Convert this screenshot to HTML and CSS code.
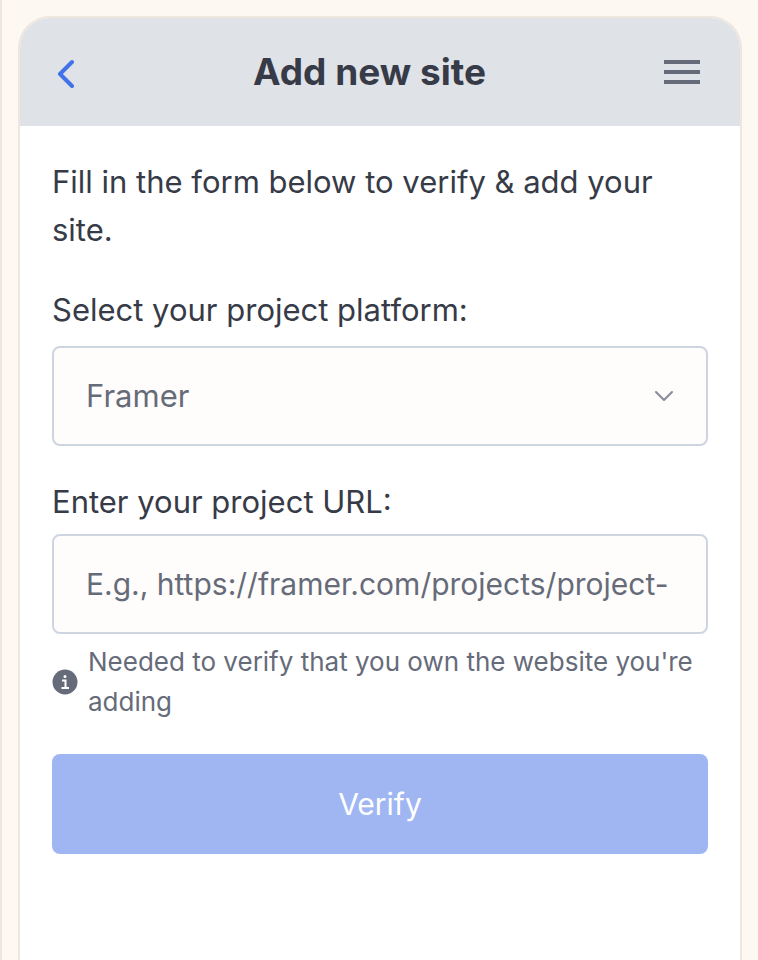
FILE: index.html
```html
<!DOCTYPE html>
<html lang="en">
<head>
  <meta charset="UTF-8" />
  <meta name="viewport" content="width=device-width, initial-scale=1.0"/>
  <title>Add new site</title>
  <link rel="stylesheet" href="styles.css">
</head>
<body>
  <div class="panel">
    <header class="panel-header">
      <button type="button" class="icon-button back-button" aria-label="Back">
        <svg width="20" height="32" viewBox="0 0 20 32" fill="none" stroke="#4272ea" stroke-width="4" stroke-linecap="round" stroke-linejoin="round"><path d="M17 6L5 18l12 12"/></svg>
      </button>
      <h1>Add new site</h1>
      <button type="button" class="icon-button menu-button" aria-label="Menu">
        <svg width="36" height="24" viewBox="0 0 36 24" fill="#666b7a"><path d="M0 0h36v4H0zM0 10h36v4H0zM0 20h36v4H0z"/></svg>
      </button>
    </header>

    <main>
      <form class="site-form">
        <p class="intro">Fill in the form below to verify &amp; add your site.</p>

        <div class="field platform-field">
          <label for="platform">Select your project platform:</label>
          <div class="select-wrap">
            <select id="platform" class="control">
              <option>Framer</option>
            </select>
            <svg class="chevron" width="20" height="12" viewBox="0 0 20 12" fill="none" stroke="#888c99" stroke-width="2" stroke-linecap="round" stroke-linejoin="round"><path d="M2 2l8 8 8-8"/></svg>
          </div>
        </div>

        <div class="field url-field">
          <label for="url">Enter your project URL:</label>
          <input type="text" id="url" class="control" placeholder="E.g., https://framer.com/projects/project-" aria-describedby="url-hint">
          <div class="hint">
            <svg width="26" height="26" viewBox="0 0 26 26"><circle cx="13" cy="13" r="12.5" fill="#666b7a"/><circle cx="13" cy="7.5" r="1.5" fill="#fff"/><path d="M10 11.5h3.5V19M9.5 19h7.5" fill="none" stroke="#fff" stroke-width="2"/></svg>
            <p id="url-hint">Needed to verify that you own the website you're adding</p>
          </div>
        </div>

        <button type="submit" class="verify-button" disabled>Verify</button>
      </form>
    </main>
  </div>
</body>
</html>
```
FILE: styles.css
```css
/* General Styles */
* {
  box-sizing: border-box;
}

body {
  margin: 0;
  padding: 16px 16px 0 16px;
  min-height: 100vh;
  display: flex;
  background-color: #fdf8f1;
  border-left: 2px solid #efe6de;
  font-family: Inter, sans-serif;
  font-size: 31px;
  line-height: 48px;
  color: #373b47;
}

h1,
p {
  margin: 0;
}

button,
input,
select {
  font: inherit;
}

/* Panel */
.panel {
  flex: 1;
  min-width: 0;
  background-color: #fff;
  border: 2px solid #efe6de;
  border-bottom: none;
  border-radius: 32px 32px 0 0;
  overflow: hidden;
}

.panel-header {
  display: flex;
  align-items: center;
  justify-content: space-between;
  height: 108px;
  padding: 0 40px 0 35px;
  background-color: #dfe2e7;
}

.panel-header h1 {
  font-size: 37px;
  font-weight: 700;
}

.icon-button {
  display: flex;
  padding: 0;
  border: none;
  background: none;
}

/* Form */
.site-form {
  padding: 32px;
}

.intro {
  margin-bottom: 32px;
}

.field {
  margin-bottom: 32px;
}

.field label {
  display: block;
  margin-bottom: 8px;
}

.platform-field label {
  margin-bottom: 12px;
}

.control {
  display: block;
  width: 100%;
  height: 100px;
  padding: 0 32px;
  border: 2px solid #ced5e1;
  border-radius: 8px;
  background-color: #fefdfb;
  color: #666b7a;
  appearance: none;
}

.control::placeholder {
  color: #666b7a;
  opacity: 1;
}

.url-field .control {
  font-size: 30px;
}

.select-wrap {
  position: relative;
}

.chevron {
  position: absolute;
  right: 34px;
  top: 44px;
}

.hint {
  display: flex;
  align-items: center;
  gap: 10px;
  margin-top: 8px;
  font-size: 26px;
  line-height: 40px;
  color: #666b7a;
}

.hint svg {
  flex: none;
}

.verify-button {
  display: block;
  width: 100%;
  height: 100px;
  border: none;
  border-radius: 8px;
  background-color: #9fb6f3;
  color: #fff;
  font-size: 30px;
}
```
